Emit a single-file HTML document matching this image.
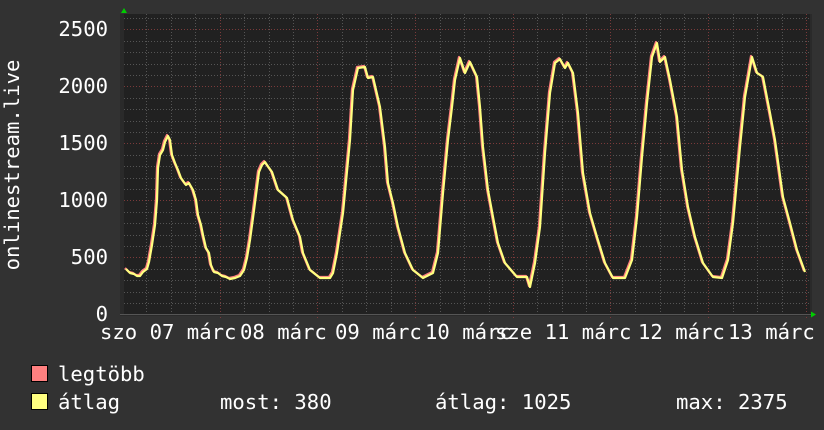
<!DOCTYPE html>
<html><head><meta charset="utf-8"><style>
html,body{margin:0;padding:0;background:#333;}
svg{display:block}
text{font-family:"DejaVu Sans Mono","Liberation Mono",monospace;font-size:20.6px;fill:#fff;}
</style></head><body>
<svg width="824" height="430" viewBox="0 0 824 430" xmlns="http://www.w3.org/2000/svg">
<defs>
<polyline id="pl" points="126,269 130,273 134,274 137,276 140,276 143,272 147,269 149,262 152,245 155,225 157,200 158,168 160,155 163,150 165,142 168,136 170,140 172,155 175,163 178,170 181,178 186,185 189,183 193,190 196,200 198,215 201,225 203,235 206,248 209,253 211,265 214,272 218,273 222,276 226,277 230,279 235,278 240,276 244,270 247,258 250,240 253,218 256,195 259,172 262,165 265,162 267,165 272,172 278,190 287,198 293,220 300,237 303,253 310,270 320,278 330,278 333,273 337,253 343,213 350,140 353,90 358,68 365,67 368,78 373,77 380,107 385,147 388,183 393,203 398,227 405,253 413,270 423,278 433,273 438,253 443,193 448,140 452,107 455,80 460,58 465,73 470,62 477,77 480,107 483,147 488,190 493,217 498,243 505,263 517,277 527,277 530,287 535,263 540,227 545,153 550,93 555,63 560,59 565,68 568,63 573,73 578,113 583,173 590,213 597,237 605,263 613,278 625,278 632,260 637,217 642,157 647,103 652,57 657,43 660,62 665,57 670,80 677,117 682,170 688,207 695,237 703,263 713,277 722,278 728,260 733,223 740,147 745,97 752,57 757,73 763,77 770,113 775,140 783,197 790,223 797,250 805,272"/>
</defs>
<rect width="824" height="430" fill="#323232"/>
<rect x="120" y="14" width="692" height="302" fill="#2a2a2a"/>
<rect x="124" y="14" width="686" height="301" fill="#212121"/>
<g stroke="#555" stroke-width="1" stroke-dasharray="1,2" fill="none">
<path d="M124 303.5H810M124 292.5H810M124 280.5H810M124 269.5H810M124 246.5H810M124 235.5H810M124 223.5H810M124 212.5H810M124 189.5H810M124 178.5H810M124 166.5H810M124 155.5H810M124 132.5H810M124 121.5H810M124 109.5H810M124 98.5H810M124 75.5H810M124 64.5H810M124 52.5H810M124 41.5H810M124 18.5H810"/>
<path d="M146.5 14V315M171.5 14V315M195.5 14V315M244.5 14V315M269.5 14V315M293.5 14V315M342.5 14V315M366.5 14V315M391.5 14V315M440.5 14V315M464.5 14V315M489.5 14V315M537.5 14V315M562.5 14V315M586.5 14V315M635.5 14V315M660.5 14V315M684.5 14V315M733.5 14V315M757.5 14V315M782.5 14V315"/>
</g>
<g stroke="#7a3a3a" stroke-width="1" stroke-dasharray="1,2" fill="none">
<path d="M124 257.5H810M124 200.5H810M124 143.5H810M124 86.5H810M124 29.5H810"/>
<path d="M220.5 14V318M317.5 14V318M415.5 14V318M513.5 14V318M610.5 14V318M708.5 14V318M806.5 14V318"/>
</g>
<path d="M120 314.5H812" stroke="#555" stroke-width="1"/>
<path d="M124 8L121 13H127Z" fill="#0c0"/>
<path d="M816 314.5L811 311.5V317.5Z" fill="#0c0"/>
<g fill="none" stroke-linejoin="round" stroke-width="2.2">
<use href="#pl" stroke="#ff8080" transform="translate(-1,-1)"/>
<use href="#pl" stroke="#ffff80"/>
</g>
<text x="108" y="36" text-anchor="end">2500</text>
<text x="108" y="93" text-anchor="end">2000</text>
<text x="108" y="150" text-anchor="end">1500</text>
<text x="108" y="207" text-anchor="end">1000</text>
<text x="108" y="264" text-anchor="end">500</text>
<text x="108" y="321" text-anchor="end">0</text>
<text transform="translate(19,165) rotate(-90)" text-anchor="middle">onlinestream.live</text>
<g>
<text x="100" y="339">szo 07 márc</text>
<text x="240" y="339">08 márc</text>
<text x="335" y="339">09 márc</text>
<text x="425" y="339">10 márc</text>
<text x="495" y="339">sze 11 márc</text>
<text x="638" y="339">12 márc</text>
<text x="728" y="339">13 márc</text>
</g>
<rect x="31.5" y="365.5" width="16" height="16" fill="#ff8080" stroke="#000"/>
<rect x="31.5" y="393.5" width="16" height="16" fill="#ffff80" stroke="#000"/>
<text x="58" y="381">legtöbb</text>
<text x="58" y="409">átlag</text>
<text x="220" y="409">most: 380</text>
<text x="435" y="409">átlag: 1025</text>
<text x="676" y="409">max: 2375</text>
</svg>
</body></html>
